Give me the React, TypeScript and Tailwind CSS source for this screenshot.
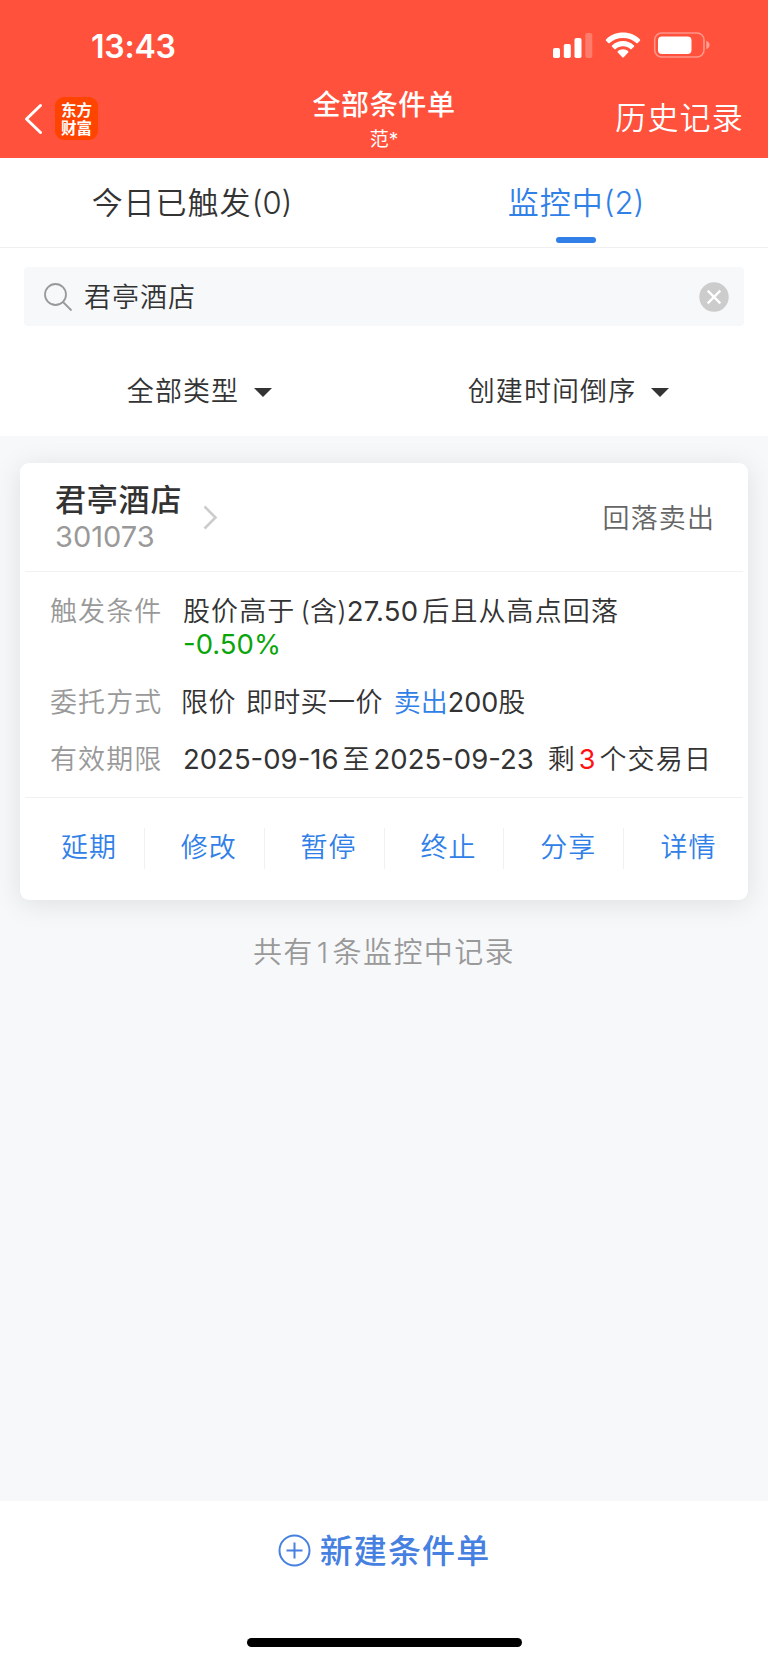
import type { ReactNode } from 'react';

const actions = ['延期', '修改', '暂停', '终止', '分享', '详情'];

function StatusBar() {
  return (
    <div className="flex h-[72px] items-end justify-between pr-[57px] pl-[91px]">
      <span className="h-[45px] text-[32px] leading-10 font-semibold tracking-[-0.200px]">13:43</span>
      <div className="flex h-[46px] items-start pt-[6px]">
        <svg width="40" height="27" viewBox="0 0 40 27" fill="#fff">
          <rect x="0" y="16" width="7" height="10" rx="1.8" />
          <rect x="10.8" y="12" width="7" height="14" rx="1.8" />
          <rect x="21.5" y="6" width="7" height="20" rx="1.8" />
          <rect x="32.3" y="1" width="7" height="25" rx="1.8" opacity="0.25" />
        </svg>
        <svg className="ml-[12px]" width="36" height="27" viewBox="0 0 36 27" fill="#fff">
          <path d="M18 .6c6.700 0 12.700 2.600 17 6.900.4.4.4.800 0 1.200l-2.300 2.400c-.4.400-.9.400-1.300 0C28 7.900 23.200 6 18 6S8 7.900 4.600 11.100c-.4.400-.9.400-1.300 0L1 8.700c-.4-.4-.4-.8 0-1.200C5.300 3.200 11.300.6 18 .6Z" />
          <path d="M18 9c4.300 0 8.100 1.700 11 4.400.4.400.4.900 0 1.300l-2.400 2.400c-.4.400-.9.400-1.300 0-1.900-1.800-4.500-2.800-7.300-2.800s-5.400 1-7.300 2.800c-.4.400-.9.400-1.300 0L7 14.700c-.4-.4-.4-.9 0-1.300C9.900 10.700 13.700 9 18 9Z" />
          <path d="M18 17.300c2 0 3.800.7 5.200 1.900.4.400.4.900 0 1.300l-4.500 4.700c-.4.400-1 .400-1.400 0l-4.500-4.700c-.4-.4-.4-.9 0-1.300 1.400-1.200 3.200-1.900 5.200-1.900Z" />
        </svg>
        <svg className="ml-[12px]" width="58" height="27" viewBox="0 0 58 27">
          <rect x="1.700" y="1" width="49.300" height="24" rx="7" fill="none" stroke="#fff" strokeOpacity="0.4" strokeWidth="1.6" />
          <rect x="5" y="4.500" width="33.500" height="17.500" rx="4" fill="#fff" />
          <path d="M53.300 8.800c2 .8 3.300 2.400 3.300 4.200s-1.300 3.400-3.300 4.200Z" fill="#fff" opacity="0.45" />
        </svg>
      </div>
    </div>
  );
}

function NavBar() {
  return (
    <div className="grid h-[86px] grid-cols-[1fr_200px_1fr]">
      <div className="flex items-center pt-[7px] pl-[24px]">
        <svg width="19" height="32" viewBox="0 0 19 32" fill="none" stroke="#fff" strokeWidth="3" strokeLinecap="round" strokeLinejoin="round">
          <path d="M16.500 2.500 2.500 16l14 13.500" />
        </svg>
        <div className="ml-[12px] h-[43px] w-[43px] rounded-[9px] bg-[#ff4400] pt-[3px] text-center font-['Noto_Sans_CJK_SC',sans-serif] text-[15.500px] leading-[18px] font-bold">
          东方
          <br />
          财富
        </div>
      </div>
      <div className="flex flex-col items-center pt-[15px]">
        <h1 className="text-[28px] leading-9 font-medium tracking-[0.6px]">全部条件单</h1>
        <span className="pt-px text-[19px] leading-8 font-normal">范*</span>
      </div>
      <div className="flex justify-end pt-[26px] pr-[24px] text-[31px] leading-10 tracking-[1.200px]">历史记录</div>
    </div>
  );
}

function Tabs() {
  return (
    <div className="grid h-[90px] grid-cols-2 border-b border-[#f0f0f1] text-[31px] leading-10">
      <div className="pt-[25px] text-center">
        <span className="tracking-[1px]">今日已触发</span>(0)
      </div>
      <div className="flex flex-col items-center pt-[25px] text-[#3080e8]">
        <div>
          <span className="tracking-[1px]">监控中</span>(2)
        </div>
        <span className="mt-[14px] h-[6px] w-[40px] rounded-full bg-[#3080e8]" />
      </div>
    </div>
  );
}

function SearchBox() {
  return (
    <div className="mx-[24px] mt-[19px] flex h-[59px] items-center rounded-[4px] bg-[#f7f8fa] pr-[15px] pl-[19px]">
      <svg width="30" height="30" viewBox="0 0 30 30" fill="none" stroke="#999" strokeWidth="1.800">
        <circle cx="12.500" cy="12.500" r="10.500" />
        <path d="m20 20 8.500 8.500" />
      </svg>
      <span className="ml-[11px] flex-1 pt-[4px] tracking-[1px]">君亭酒店</span>
      <svg width="30" height="30" viewBox="0 0 30 30">
        <circle cx="15" cy="15" r="14.700" fill="#ccc" />
        <path d="m8.700 8.700 12.600 12.600m0-12.600L8.700 21.300" stroke="#fff" strokeWidth="2.400" />
      </svg>
    </div>
  );
}

function Filter({ children }: { children: ReactNode }) {
  return (
    <div className="flex items-center justify-center">
      <span className="tracking-[1.100px]">{children}</span>
      <svg className="ml-[15px]" width="18" height="9" viewBox="0 0 18 9" fill="#333">
        <path d="M0 0h18L9 9Z" />
      </svg>
    </div>
  );
}

function Row({ label, children }: { label: string; children: ReactNode }) {
  return (
    <div className="flex">
      <span className="w-[133px] shrink-0 tracking-[1.100px] text-[#999]">{label}</span>
      {children}
    </div>
  );
}

function OrderCard() {
  return (
    <section className="mx-[20px] mt-[27px] h-[437px] rounded-[9px] bg-white px-[5px] shadow-[0_4px_28px_rgba(0,0,0,0.1)]">
      <div className="flex h-[109px] items-center border-b border-[#f1f1f2] pr-[28px] pl-[30px]">
        <div className="flex flex-col pt-[2px]">
          <h2 className="text-[31px] leading-10 font-medium tracking-[0.800px]">君亭酒店</h2>
          <span className="pb-[2px] text-[29px] leading-[34px] font-normal text-[#999]">301073</span>
        </div>
        <svg className="ml-[21px]" width="15" height="25" viewBox="0 0 15 25" fill="none" stroke="#ccc" strokeWidth="2.600">
          <path d="m1.500 1.500 11 11-11 11" />
        </svg>
        <span className="ml-auto pt-[4px] tracking-[1.100px] text-[#666]">回落卖出</span>
      </div>
      <div className="flex h-[226px] flex-col border-b border-[#f1f1f2] pt-[23px] pl-[25px] leading-[33px]">
        <Row label="触发条件">
          <div>
            <span className="tracking-[1.100px]">股价高于</span>
            <span className="mr-[4px] ml-[5px] tracking-[0.200px]">
              (含)<span className="text-[27.500px] font-normal">27.50</span>
            </span>
            <span className="tracking-[1.100px]">后且从高点回落</span>
            <div className="text-[27.500px] leading-8 font-normal text-[#0aa50a]">-0.50%</div>
          </div>
        </Row>
        <div className="mt-[26px]">
          <Row label="委托方式">
            <div className="-ml-[2px]">
              <span className="tracking-[0.400px]">限价</span>
              <span className="mr-[11px] ml-[10px] tracking-[0.400px]">即时买一价</span>
              <span className="text-[#3080e8]">卖出</span>
              <span className="font-normal">200</span>股
            </div>
          </Row>
        </div>
        <div className="mt-[24px]">
          <Row label="有效期限">
            <div className="flex">
              <span className="text-[27.500px] font-normal">2025-09-16</span>
              <span className="mr-[4px] ml-[4px]">至</span>
              <span className="text-[27.500px] font-normal">2025-09-23</span>
              <span className="mr-[4px] ml-[14px]">剩</span>
              <span className="font-normal text-[#f11]">3</span>
              <span className="ml-[4px] tracking-[1.200px]">个交易日</span>
            </div>
          </Row>
        </div>
      </div>
      <div className="mt-[30px] -mr-px grid h-[39px] grid-cols-6 text-[#3080e8]">
        {actions.map((action) => (
          <button key={action} className="border-r border-[#f1f1f2] pl-[9px] tracking-[1px] last:border-0">
            {action}
          </button>
        ))}
      </div>
    </section>
  );
}

export default function App() {
  return (
    <div className="flex h-[1662px] w-[768px] flex-col bg-[#f7f8fa] font-[Inter,'Noto_Sans_CJK_SC',sans-serif] text-[27px] font-[350] text-[#333]">
      <header className="h-[158px] bg-[#ff513b] text-white">
        <StatusBar />
        <NavBar />
      </header>
      <div className="h-[278px] bg-white">
        <Tabs />
        <SearchBox />
        <div className="mx-[15px] mt-[46px] grid grid-cols-2 leading-10">
          <Filter>全部类型</Filter>
          <Filter>创建时间倒序</Filter>
        </div>
      </div>
      <OrderCard />
      <p className="mt-[33px] text-center text-[29px] leading-10 tracking-[1.400px] text-[#999]">
        共有<span className="mx-[3px]">1</span>条监控中记录
      </p>
      <footer className="mt-auto flex h-[161px] flex-col items-center bg-white pt-[28px] text-[#4680e0]">
        <button className="flex items-center text-[33px] leading-10 font-medium tracking-[1.100px]">
          <svg className="mr-[9px]" width="33" height="33" viewBox="0 0 33 33" fill="none" stroke="#4680e0" strokeWidth="2">
            <circle cx="16.500" cy="16.500" r="15" />
            <path d="M16.500 8.500v16M8.500 16.500h16" />
          </svg>
          <span className="pt-[2px]">新建条件单</span>
        </button>
        <span className="mt-[67px] h-[9px] w-[275px] rounded-full bg-black" />
      </footer>
    </div>
  );
}
